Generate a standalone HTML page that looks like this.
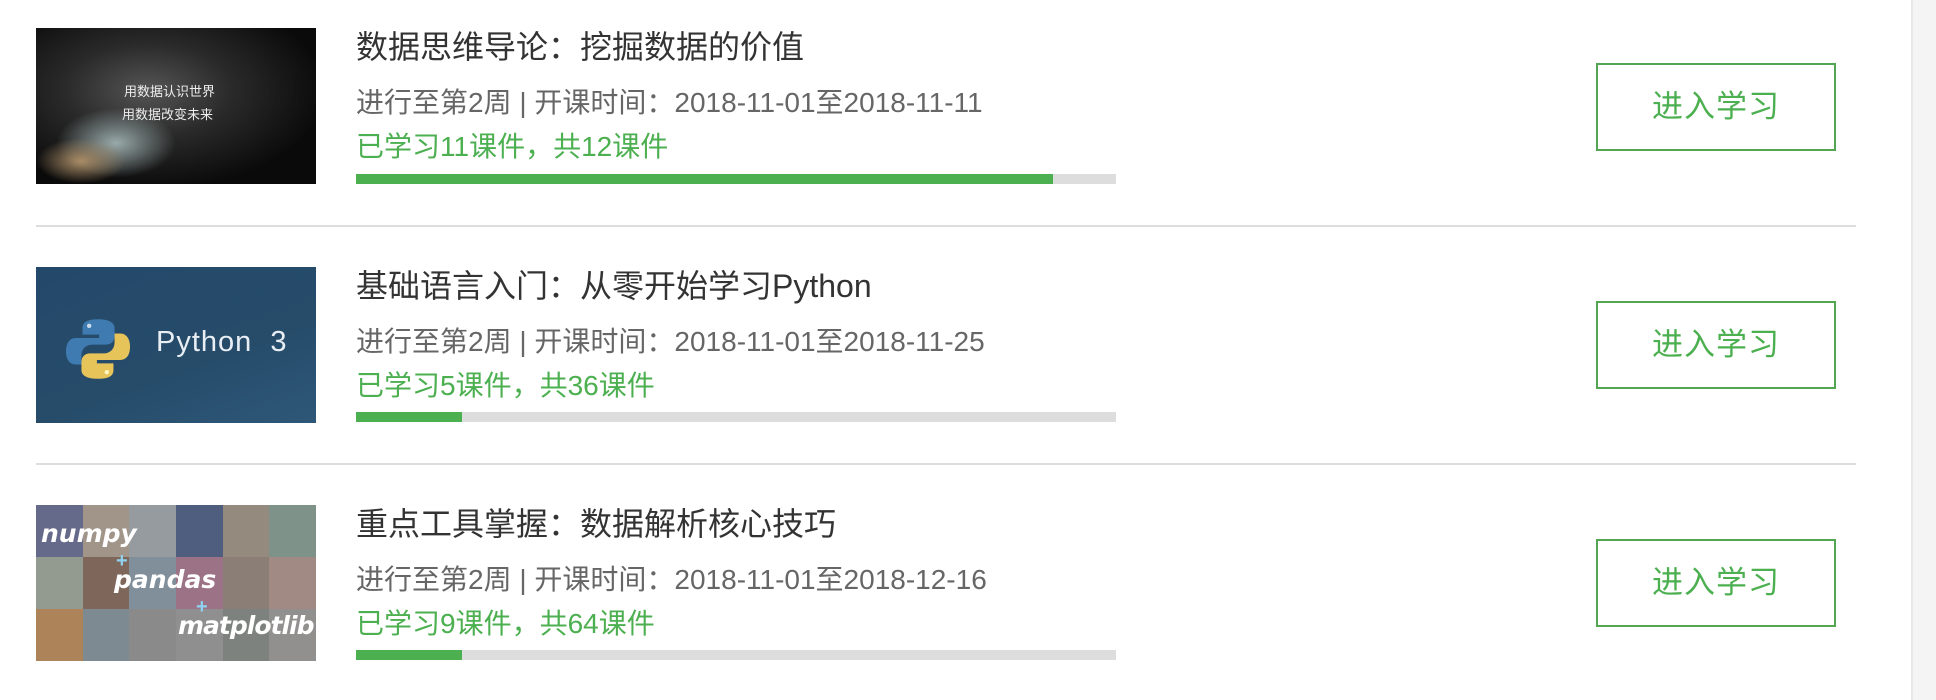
<!DOCTYPE html>
<html><head><meta charset="utf-8"><style>
body{margin:0;width:1936px;height:700px;background:#fff;position:relative;overflow:hidden;font-family:"Liberation Sans","Noto Sans CJK SC",sans-serif}
.a{position:absolute}
.title{left:356px;font-size:32px;color:#333;white-space:nowrap}
.meta{left:356px;font-size:28px;color:#666;white-space:nowrap}
.grn{left:356px;font-size:28px;color:#4caf50;white-space:nowrap}
.bar{left:356px;width:760px;height:10px;background:#ddd}
.bar i{display:block;height:100%;background:#4caf50}
.btn{left:1596px;width:236px;height:84px;border:2px solid #52a552;color:#4caf50;font-size:31px;text-align:center;line-height:84px;letter-spacing:1px}
.hr{left:36px;width:1820px;height:2px;background:#ddd}
.th{left:36px;width:280px;height:156px;overflow:hidden}
.grid{display:grid;grid-template-columns:repeat(6,1fr);grid-template-rows:repeat(3,1fr);width:100%;height:100%}
</style></head><body>
<div class="a" style="left:1911px;top:0;width:25px;height:700px;background:#f4f4f4;border-left:2px solid #e8e8e8"></div>

<div class="a th" style="top:28px;background:radial-gradient(ellipse at 40% 40%,#555 0%,#2a2a2a 35%,#0a0a0a 75%)">
<div class="a" style="left:20px;top:80px;width:120px;height:70px;background:radial-gradient(ellipse,#9aa 0%,rgba(100,110,120,0) 70%)"></div>
<div class="a" style="left:0;top:110px;width:90px;height:46px;background:radial-gradient(ellipse,#a98c66 0%,rgba(0,0,0,0) 70%)"></div>
<div class="a" style="left:88px;top:53px;color:#eee;font-size:13px;font-family:'Noto Sans CJK SC',sans-serif">用数据认识世界</div>
<div class="a" style="left:86px;top:76px;color:#eee;font-size:13px;font-family:'Noto Sans CJK SC',sans-serif">用数据改变未来</div>
</div>
<div class="a title" style="top:22px">数据思维导论：挖掘数据的价值</div>
<div class="a meta" style="top:81px">进行至第2周 | 开课时间：2018-11-01至2018-11-11</div>
<div class="a grn" style="top:125px">已学习11课件，共12课件</div>
<div class="a bar" style="top:174px"><i style="width:697px"></i></div>
<div class="a btn" style="top:63px">进入学习</div>
<div class="a hr" style="top:225px"></div>

<div class="a th" style="top:267px;background:linear-gradient(160deg,#24486a,#264c6a 60%,#2e5778)">
<svg class="a" style="left:27px;top:50px" width="70" height="64" viewBox="0 0 60 58">
<path d="M30 2 C18 2 16 6 16 10 V16 H31 V19 H10 C4 19 1 24 1 31 C1 38 4 43 10 43 H15 V35 C15 29 19 25 25 25 H37 C42 25 45 22 45 17 V10 C45 5 40 2 30 2Z" fill="#3f7bb0"/>
<path d="M30 56 C42 56 44 52 44 48 V42 H29 V39 H50 C56 39 59 34 59 27 C59 20 56 15 50 15 H45 V23 C45 29 41 33 35 33 H23 C18 33 15 36 15 41 V48 C15 53 20 56 30 56Z" fill="#e7c45a"/>
<circle cx="22" cy="8" r="2" fill="#cde"/><circle cx="38" cy="50" r="2" fill="#fff6c0"/></svg>
<div class="a" style="left:120px;top:59px;color:#e8eef4;font-size:29px;letter-spacing:1px">Python&nbsp;&nbsp;3</div>
</div>
<div class="a title" style="top:261px">基础语言入门：从零开始学习Python</div>
<div class="a meta" style="top:320px">进行至第2周 | 开课时间：2018-11-01至2018-11-25</div>
<div class="a grn" style="top:364px">已学习5课件，共36课件</div>
<div class="a bar" style="top:412px"><i style="width:106px"></i></div>
<div class="a btn" style="top:301px">进入学习</div>
<div class="a hr" style="top:463px"></div>

<div class="a th" style="top:505px">
<div class="grid">
<div style="background:#6a6f9a"></div><div style="background:#b8a898"></div><div style="background:#a9b0b5"></div><div style="background:#4b5f8a"></div><div style="background:#a89a8a"></div><div style="background:#8aa59a"></div>
<div style="background:#a6b0a3"></div><div style="background:#8a6a5a"></div><div style="background:#8ea0b0"></div><div style="background:#b07a95"></div><div style="background:#9a8a80"></div><div style="background:#b89a90"></div>
<div style="background:#c8905a"></div><div style="background:#8a9aa5"></div><div style="background:#9a9a9a"></div><div style="background:#a0a0a0"></div><div style="background:#8a8f8a"></div><div style="background:#a5a0a0"></div>
</div>
<div class="a" style="left:0;top:0;width:100%;height:100%;background:rgba(90,90,90,.25)"></div>
<div class="a" style="left:5px;top:14px;color:#fff;font-size:25px;font-style:italic;font-weight:bold;font-family:'DejaVu Sans',sans-serif">numpy</div>
<div class="a" style="left:80px;top:45px;color:#8fd3f0;font-size:20px;font-weight:bold">+</div>
<div class="a" style="left:78px;top:60px;color:#fff;font-size:25px;font-style:italic;font-weight:bold;font-family:'DejaVu Sans',sans-serif">pandas</div>
<div class="a" style="left:160px;top:91px;color:#8fd3f0;font-size:20px;font-weight:bold">+</div>
<div class="a" style="left:142px;top:106px;color:#fff;font-size:25px;font-style:italic;font-weight:bold;font-family:'DejaVu Sans',sans-serif;letter-spacing:-1px">matplotlib</div>
</div>
<div class="a title" style="top:499px">重点工具掌握：数据解析核心技巧</div>
<div class="a meta" style="top:558px">进行至第2周 | 开课时间：2018-11-01至2018-12-16</div>
<div class="a grn" style="top:602px">已学习9课件，共64课件</div>
<div class="a bar" style="top:650px"><i style="width:106px"></i></div>
<div class="a btn" style="top:539px">进入学习</div>
</body></html>
